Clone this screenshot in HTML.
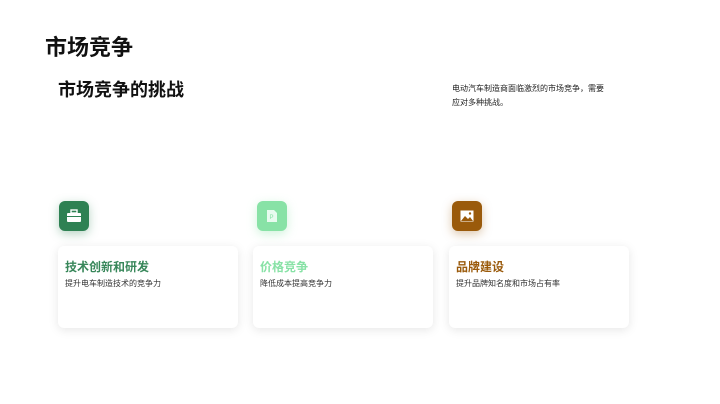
<!DOCTYPE html>
<html><head><meta charset="utf-8"><style>
body{margin:0;width:720px;height:404px;background:#fff;font-family:"Liberation Sans","Noto Sans CJK SC",sans-serif;position:relative;overflow:hidden}
.a{position:absolute}
h1{position:absolute;left:45px;top:30px;margin:0;font-size:22px;font-weight:bold;color:#111}
h2{position:absolute;left:58px;top:76px;margin:0;font-size:18px;font-weight:bold;color:#111}
.p{left:452px;top:82px;width:162px;font-size:8px;line-height:14px;color:#222}
.ic{width:30px;height:30px;border-radius:6px;display:flex;align-items:center;justify-content:center}
.card{width:180px;height:82px;top:246px;background:#fff;border-radius:6px;box-shadow:0 2px 10px rgba(0,0,0,.1)}
.card b{position:absolute;left:7px;top:12px;font-size:12px}
.card span{position:absolute;left:7px;top:32px;font-size:8px;color:#333}
</style></head><body>
<h1>市场竞争</h1>
<h2>市场竞争的挑战</h2>
<div class="a p">电动汽车制造商面临激烈的市场竞争，需要<br>应对多种挑战。</div>

<div class="a ic" style="left:59px;top:201px;background:#2e8153;box-shadow:0 3px 10px rgba(46,129,83,.35)">
<svg width="16" height="14" viewBox="0 0 16 14"><rect x="5" y="1" width="6" height="3" fill="none" stroke="#fff" stroke-width="1.4"/><rect x="1" y="4" width="14" height="9" rx="1" fill="#fff"/><rect x="1" y="7" width="14" height="1" fill="#2e8153"/></svg></div>
<div class="a ic" style="left:257px;top:201px;background:#88e2a6;box-shadow:0 3px 10px rgba(136,226,166,.4)">
<svg width="12" height="14" viewBox="0 0 12 14"><path d="M1 1h7l3 3v9H1z" fill="#e8fbef"/><text x="3.5" y="10" font-size="6" fill="#88e2a6" font-family="Liberation Sans">P</text></svg></div>
<div class="a ic" style="left:452px;top:201px;background:#9a5a0b;box-shadow:0 3px 10px rgba(154,90,11,.35)">
<svg width="14" height="12" viewBox="0 0 14 12"><rect x="0.5" y="0.5" width="13" height="11" fill="#fff"/><path d="M1 11L5 6l3 3 2-2 3 4z" fill="#9a5a0b"/><circle cx="10" cy="3.5" r="1.2" fill="#9a5a0b"/></svg></div>

<div class="a card" style="left:58px"><b style="color:#38875a">技术创新和研发</b><span>提升电车制造技术的竞争力</span></div>
<div class="a card" style="left:253px"><b style="color:#88e2a6">价格竞争</b><span>降低成本提高竞争力</span></div>
<div class="a card" style="left:449px"><b style="color:#9a5a0b">品牌建设</b><span>提升品牌知名度和市场占有率</span></div>
</body></html>
